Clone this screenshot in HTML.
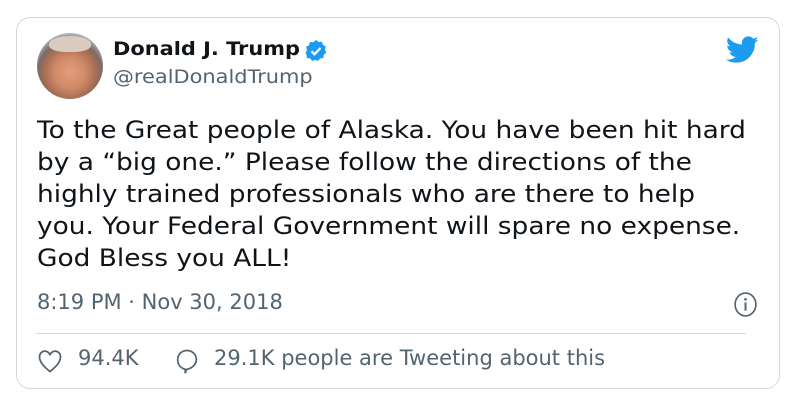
<!DOCTYPE html>
<html><head><style>
body{margin:0;width:799px;height:408px;background:#fff;font-family:"DejaVu Sans",sans-serif;position:relative;overflow:hidden}
.card{position:absolute;left:16px;top:17px;width:764px;height:372px;border:1px solid #cfd9de;border-radius:14px;box-sizing:border-box}
.av{position:absolute;left:37px;top:33px;width:66px;height:66px;border-radius:50%;background:radial-gradient(circle at 50% 60%,#e0a07e 0,#d08a68 30%,#a86e55 50%,#7d6a63 62%,#b9d0de 80%,#dbe9f1 100%);overflow:hidden}
.hair{position:absolute;left:12px;top:3px;width:42px;height:16px;border-radius:50% 50% 40% 40%;background:#d9cbbd}
.s{transform:scaleX(1.1);transform-origin:0 0;white-space:pre;position:absolute}
.n{white-space:pre;position:absolute}
.name{left:113px;top:38px;font-size:19px;font-weight:bold;color:#0f1419}
.handle{left:113px;top:66px;font-size:19px;color:#536471}
.text{left:37px;top:114px;font-size:24px;line-height:32px;color:#0f1419}
.time{left:37px;top:290px;font-size:21px;color:#536471}
.sep{position:absolute;left:36px;top:333px;width:710px;height:1px;background:#cfd9de}
.foot{top:346px;font-size:21px;color:#536471}
</style></head><body>
<div class="card"></div>
<div class="av"><div class="hair"></div></div>
<div class="s name">Donald J. Trump</div>
<svg style="position:absolute;left:304px;top:39px" width="24" height="24" viewBox="0 0 24 24"><path fill="#1d9bf0" d="M12 1l2.6 2 3.3-.3 1 3.1 2.9 1.7-.9 3.2 1.4 3-2.6 2-.3 3.3-3.3.4-2 2.6-3-1.3-3 1.3-2-2.6-3.3-.4-.3-3.3L1.6 14l1.4-3-.9-3.2L5 6.1l1-3.1 3.3.3z"/><path d="M7.5 12.3l3 3 6-6.3" stroke="#fff" stroke-width="2.2" fill="none"/></svg>
<div class="s handle">@realDonaldTrump</div>
<svg style="position:absolute;left:726px;top:36px" width="33" height="28" viewBox="0 0 24 20"><path fill="#1d9bf0" d="M23.6 2.4c-.9.4-1.8.6-2.8.8 1-.6 1.8-1.6 2.1-2.7-.9.6-2 1-3.1 1.2C19 .7 17.7.1 16.3.1c-2.7 0-4.8 2.2-4.8 4.8 0 .4 0 .8.1 1.1-4-.2-7.6-2.1-10-5.1-.4.7-.7 1.6-.7 2.4 0 1.7.9 3.2 2.2 4-.8 0-1.5-.2-2.2-.6v.1c0 2.3 1.7 4.3 3.9 4.7-.4.1-.8.2-1.3.2-.3 0-.6 0-.9-.1.6 1.9 2.4 3.3 4.5 3.4-1.7 1.3-3.7 2.1-6 2.1-.4 0-.8 0-1.2-.1 2.1 1.4 4.7 2.2 7.4 2.2 8.9 0 13.7-7.4 13.7-13.7v-.6c.9-.7 1.8-1.5 2.4-2.5z"/></svg>
<div class="s text">To the Great people of Alaska. You have been hit hard
by a “big one.” Please follow the directions of the
highly trained professionals who are there to help
you. Your Federal Government will spare no expense.
God Bless you ALL!</div>
<div class="n time">8:19 PM · Nov 30, 2018</div>
<svg style="position:absolute;left:733px;top:291px" width="25" height="27" viewBox="0 0 24 26"><ellipse cx="12" cy="13" rx="10" ry="11" fill="none" stroke="#536471" stroke-width="1.6"/><circle cx="12" cy="8" r="1.3" fill="#536471"/><path d="M12 11v8" stroke="#536471" stroke-width="1.9"/></svg>
<div class="sep"></div>
<svg style="position:absolute;left:36px;top:347px" width="28" height="28" viewBox="0 0 24 24"><path d="M12 21C6 16.5 3 12.5 3 8.5 3 5.8 5 3.5 7.5 3.5c2 0 3.5 1.2 4.5 3 1-1.8 2.5-3 4.5-3C19 3.5 21 5.8 21 8.5c0 4-3 8-9 12.5z" fill="none" stroke="#536471" stroke-width="1.5"/></svg>
<div class="n foot" style="left:78px">94.4K</div>
<svg style="position:absolute;left:173px;top:347px" width="28" height="28" viewBox="0 0 24 24"><path d="M12 3c4.5 0 8 3.3 8 7.8 0 4.3-3.8 7.5-8.5 8.5L10.5 22.5v-3.3C6.5 18 4 15 4 10.8 4 6.3 7.5 3 12 3z" fill="none" stroke="#536471" stroke-width="1.5"/></svg>
<div class="n foot" style="left:214px">29.1K people are Tweeting about this</div>
</body></html>
